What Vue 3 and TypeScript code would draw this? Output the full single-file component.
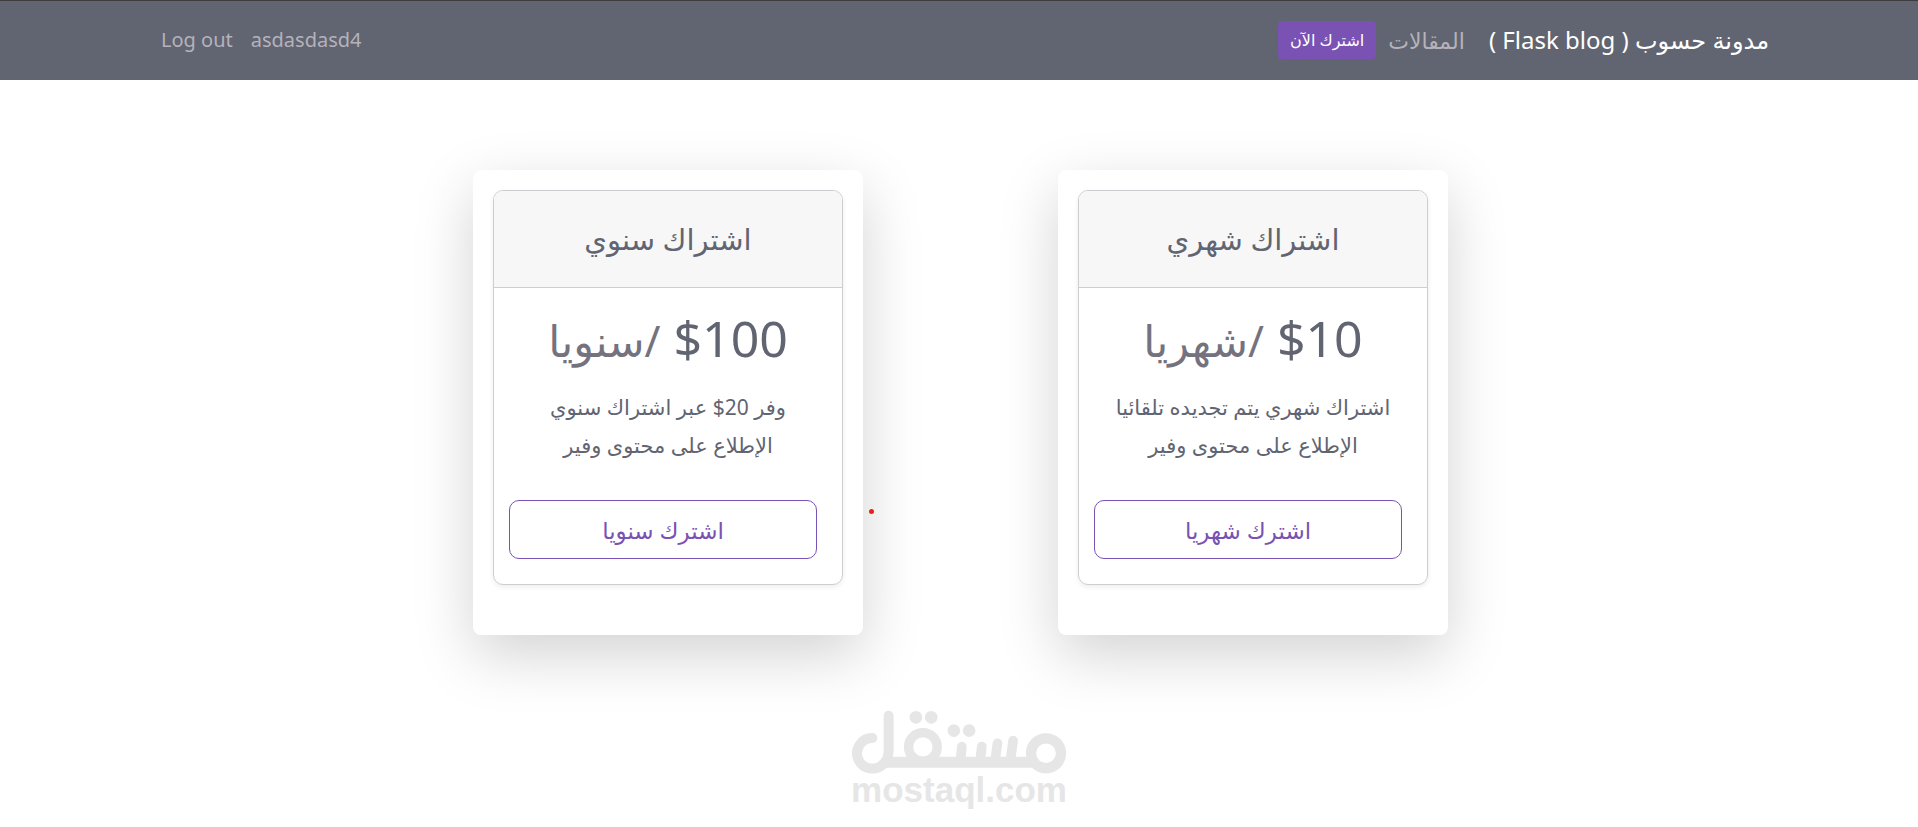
<script setup lang="ts">
interface Plan {
  id: string
  title: string
  price: string
  period: string
  features: string[]
  action: string
  recording?: boolean
}

const plans: Plan[] = [
  {
    id: 'monthly',
    title: 'اشتراك شهري',
    price: '$10',
    period: '/شهريا',
    features: ['اشتراك شهري يتم تجديده تلقائيا', 'الإطلاع على محتوى وفير'],
    action: 'اشترك شهريا',
  },
  {
    id: 'yearly',
    title: 'اشتراك سنوي',
    price: '$100',
    period: '/سنويا',
    features: ['وفر 20$ عبر اشتراك سنوي', 'الإطلاع على محتوى وفير'],
    action: 'اشترك سنويا',
    recording: true,
  },
]
</script>

<template>
  <div class="page" dir="rtl" lang="ar">
    <header class="navbar">
      <nav class="navbar-inner">
        <a class="brand" href="#">مدونة حسوب ( Flask blog )</a>
        <a class="nav-link" href="#articles">المقالات</a>
        <a class="subscribe" href="#plans">اشترك الآن</a>
        <div class="account">
          <a class="account-link" href="#profile">asdasdasd4</a>
          <a class="account-link" href="#logout">Log out</a>
        </div>
      </nav>
    </header>

    <main id="plans" class="plans">
      <section v-for="plan in plans" :key="plan.id" class="panel">
        <div class="card">
          <h2 class="card-title">{{ plan.title }}</h2>
          <div class="card-body">
            <p class="price">{{ plan.price }} <small class="period">{{ plan.period }}</small></p>
            <ul class="features">
              <li v-for="feature in plan.features" :key="feature">{{ feature }}</li>
            </ul>
            <button class="action" type="button">{{ plan.action }}</button>
          </div>
        </div>
        <span v-if="plan.recording" class="dot"></span>
      </section>
    </main>

    <footer class="footer" dir="ltr">
      <svg class="logo" viewBox="60 60 652 194" role="img" aria-label="مستقل">
        <g fill="none" stroke="#e6e6e6" stroke-linecap="round">
          <circle cx="646" cy="190" r="45" stroke-width="31" />
          <circle cx="276" cy="171" r="43" stroke-width="28" />
          <path d="M124 144A46 46 0 1 0 158 221Q173 207 173 180V77" stroke-width="30" />
          <path d="M158 217H614" stroke-width="33" stroke-linecap="butt" />
          <path d="M393 170L389 212M453 170L448 212M500 160L493 212M547 152L539 212" stroke-width="29" />
        </g>
        <g fill="#e6e6e6">
          <circle cx="255" cy="82" r="19" />
          <circle cx="301" cy="82" r="19" />
          <circle cx="369" cy="122" r="19" />
          <circle cx="415" cy="122" r="19" />
        </g>
      </svg>
      <span class="domain">mostaql.com</span>
    </footer>
  </div>
</template>

<style>
body {
  background: #fff;
}
</style>

<style scoped>
.page {
  font-family: "Noto Sans", "DejaVu Sans", sans-serif;
  font-size: 21px;
  color: #616471;
}

a {
  text-decoration: none;
}

.navbar {
  box-sizing: border-box;
  height: 80px;
  border-top: 1px solid #3c3c3f;
  background: #616471;
}

.navbar-inner {
  display: flex;
  align-items: center;
  box-sizing: border-box;
  max-width: 1620px;
  height: 100%;
  margin: 0 auto;
  padding-bottom: 2px;
}

.brand {
  margin-left: 24px;
  font-size: 24px;
  line-height: 32px;
  color: #fff;
}

.nav-link {
  font-size: 22px;
  line-height: 32px;
  color: #b5b2ba;
}

.account-link {
  font-size: 20px;
  color: #b5b2ba;
}

.subscribe {
  margin-right: 12px;
  padding: 0 12px;
  border-radius: 4px;
  background: #7952b3;
  font-size: 16px;
  line-height: 38px;
  color: #fff;
}

.account {
  display: flex;
  gap: 18px;
  margin-right: auto;
  padding-left: 12px;
}

.plans {
  display: flex;
  justify-content: center;
  gap: 195px;
  padding: 90px 0 0 3px;
}

.panel {
  position: relative;
  box-sizing: border-box;
  width: 390px;
  padding: 20px 20px 50px;
  border-radius: 8px;
  background: #fff;
  box-shadow: 0 20px 60px rgba(0, 0, 0, 0.175);
}

.card {
  overflow: hidden;
  border: 1px solid #cdced1;
  border-radius: 10px;
  box-shadow: 0 2px 5px rgba(0, 0, 0, 0.075);
  text-align: center;
}

.card-title {
  margin: 0;
  border-bottom: 1px solid #cdced1;
  background: #f7f7f7;
  font-size: 29px;
  font-weight: 400;
  line-height: 96px;
}

.card-body {
  padding: 15px 15px 25px;
}

.price {
  height: 70px;
  margin: 0;
  font-size: 50px;
  line-height: 70px;
  white-space: nowrap;
}

.period {
  font-size: 43px;
  line-height: 60px;
  color: #75727f;
}

.features {
  margin: 15px 0 36px;
  padding: 0;
  line-height: 38px;
  list-style: none;
  white-space: nowrap;
}

.action {
  display: block;
  box-sizing: border-box;
  width: 308px;
  height: 59px;
  margin: 0 auto 0 0;
  border: 1px solid #7952b3;
  border-radius: 10px;
  background: #fff;
  font-family: inherit;
  font-size: 23px;
  color: #7952b3;
}

.dot {
  position: absolute;
  top: 339px;
  right: -11px;
  width: 5px;
  height: 5px;
  border-radius: 50%;
  background: #e8201c;
}

.footer {
  display: flex;
  flex-direction: column;
  align-items: center;
  padding-top: 75px;
}

.logo {
  display: block;
  width: 217px;
}

.domain {
  margin-top: -5px;
  font-family: "Liberation Sans", Arial, sans-serif;
  font-size: 35px;
  font-weight: 700;
  line-height: 40px;
  color: #e6e6e6;
}
</style>
